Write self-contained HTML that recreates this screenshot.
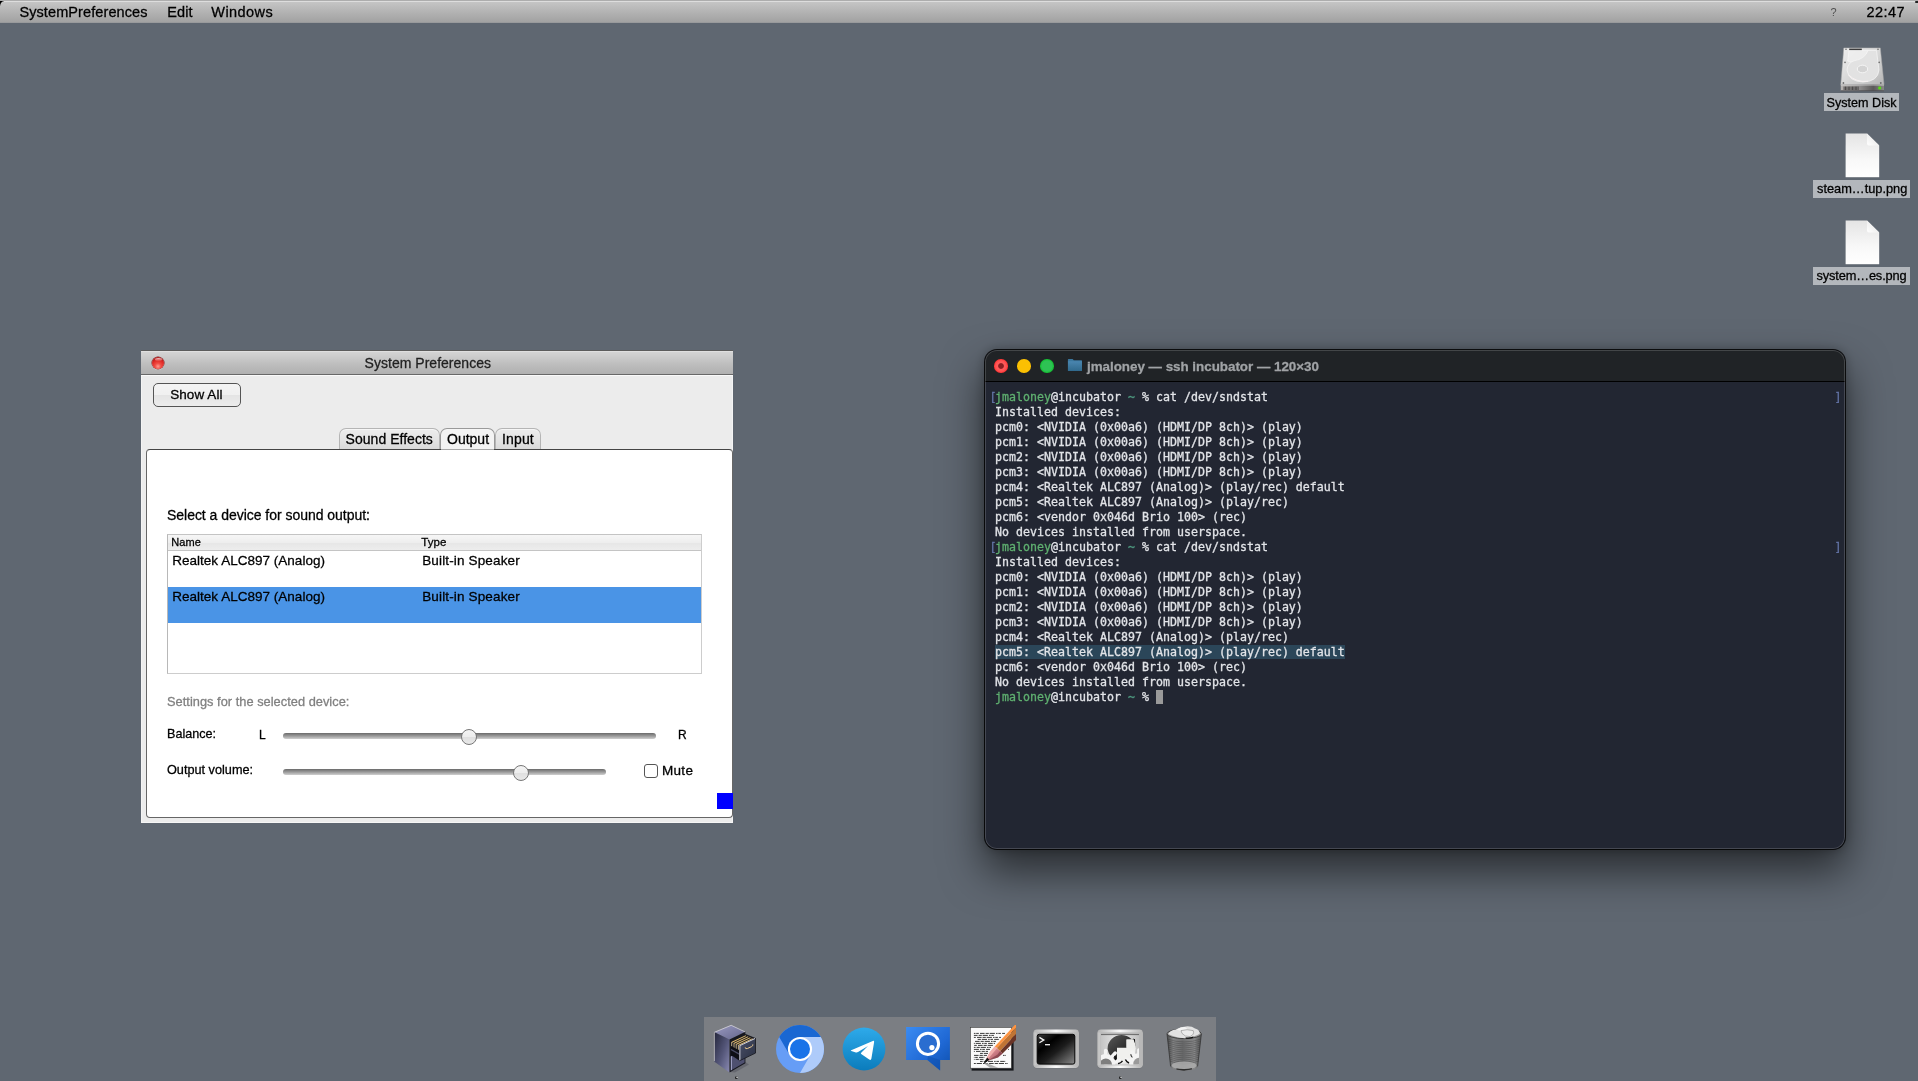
<!DOCTYPE html>
<html lang="en">
<head>
<meta charset="utf-8">
<title>Desktop</title>
<style>
*{box-sizing:border-box;margin:0;padding:0}
html,body{width:1918px;height:1081px;overflow:hidden;background:#5f6771}
body{position:relative;font-family:"Liberation Sans",sans-serif;color:#000;-webkit-font-smoothing:antialiased}
body>div{will-change:transform}
.abs{position:absolute}
.t{position:absolute;white-space:pre;line-height:1;-webkit-text-stroke:.28px currentColor}
/* menubar */
#menubar{position:absolute;left:0;top:0;width:1918px;height:23px;background:linear-gradient(#adadad 0,#adadad 1px,#dedede 1px,#dcdcdc 2px,#c4c4c4 2.5px,#b3b3b3 12px,#a2a2a2 22px,#8f9296 23px)}
#menubar .t{font-size:14.5px;top:5px}
/* desktop icons */
.lbl{position:absolute;background:#b3b7bc;font-size:13px;line-height:18px;height:18px;text-align:center;white-space:pre}
/* sysprefs window */
#sp{position:absolute;left:141px;top:350px;width:592px;height:473px;background:#ececec;overflow:hidden;border-top:1px solid #5c5c5c;box-shadow:inset 1px 0 0 #f4f4f4,inset -1px 0 0 #f4f4f4,inset 0 -1px 0 #f6f6f6}
#sp-title{position:absolute;left:0;top:0;width:592px;height:25px;background:linear-gradient(#e0e0e0 0,#dedede 1px,#d3d3d3 1.5px,#cdcdcd 5px,#bebebe 13px,#b1b1b1 22.5px,#6a6a6a 23px,#666 24px,#fafafa 24px,#fafafa 25px)}
#panel{position:absolute;left:5px;top:98px;width:587px;height:369px;background:#fff;border:1px solid #666;border-top-color:#444;border-radius:4px}

.btn{border:1px solid #555;border-radius:5px;background:linear-gradient(#f4f4f4 0,#f0f0f0 49%,#e4e4e4 51%,#ececec 100%)}
.tab{border:1px solid #b5b5b5;border-bottom:none;border-radius:7px 7px 0 0;background:linear-gradient(#ececec,#e2e2e2 60%,#d8d8d8);box-shadow:inset 0 1px 0 #f6f6f6}
.tab.act{background:#f3f3f3;border-color:#9a9a9a}
#pc{position:absolute;left:0;top:0;width:592px;height:472px}
#tbl{position:absolute;left:26px;top:183px;width:535px;height:140px;border:1px solid #cdcdcd;border-left-color:#b8b8b8;border-top-color:#c4c4c4;background:#fff}
#th{position:absolute;left:0;top:0;width:533px;height:16px;background:linear-gradient(#f6f6f6 0,#eeeeee 50%,#e6e6e6 51%,#ededed 100%);border-bottom:1px solid #c4c4c4}
.row{position:absolute;left:0;width:533px;height:36px}
.rsel{background:#4a94e6}
.trk{position:absolute;height:6px;border-radius:3px;background:linear-gradient(#6a6a6a,#9a9a9a 50%,#cfcfcf)}
.thumb{position:absolute;width:16px;height:16px;border-radius:50%;border:1px solid #777;background:linear-gradient(#f4f4f4 0,#ededed 49%,#e0e0e0 51%,#e8e8e8 100%)}
/* terminal */
#term{position:absolute;left:985px;top:350px;width:860px;height:499px;border-radius:12px;background:#222632;box-shadow:0 0 0 1px rgba(0,0,0,.85),0 21px 42px 2px rgba(0,0,0,.56),0 0 12px rgba(0,0,0,.3);overflow:hidden}
#term-title{position:absolute;left:0;top:0;width:860px;height:32px;background:#202326;border-bottom:1px solid #000}
#term pre{position:absolute;left:3px;top:40px;font-family:"DejaVu Sans Mono","Liberation Mono",monospace;font-size:11.6px;line-height:15px;color:#e2e4e8;letter-spacing:0.017px;-webkit-text-stroke:.3px currentColor}
.g{color:#5fb070}.tl{color:#4e9a80}.br{color:#6272a4;position:relative;left:1.5px}
.sel{background:#2b4659}
/* dock */
#dock{position:absolute;left:704px;top:1017px;width:512px;height:64px;background:#7b7e83}
</style>
</head>
<body>
<!-- MENUBAR -->
<div id="menubar">
<div class="abs" style="left:0;top:1px;width:4px;height:5px;background:radial-gradient(ellipse at 100% 100%,transparent 3.4px,#000 4.2px)"></div>
<div class="abs" style="left:1915px;top:1px;width:3px;height:2px;background:#222;border-radius:1px 0 0 1px"></div>
<span class="t" style="left:19.4px;letter-spacing:.1px">SystemPreferences</span>
<span class="t" style="left:167.2px;letter-spacing:.12px">Edit</span>
<span class="t" style="left:211.3px;letter-spacing:.42px">Windows</span>
<span class="t" style="left:1830.5px;font-size:11px;top:7px;color:#505050;-webkit-text-stroke:0">?</span>
<span class="t" style="left:1866.4px;letter-spacing:.45px">22:47</span>
</div>

<!-- DESKTOP ICONS -->
<div id="desk">
<svg width="60" height="56" viewBox="0 0 60 56" style="position:absolute;left:1832px;top:42px">
<defs>
<linearGradient id="hdT" x1="0" y1="0" x2="1" y2="1"><stop offset="0" stop-color="#efefef"/><stop offset=".5" stop-color="#d8d8d8"/><stop offset="1" stop-color="#b6b6b6"/></linearGradient>
<linearGradient id="hdF" x1="0" y1="0" x2="1" y2="0"><stop offset="0" stop-color="#b8b4b2"/><stop offset=".45" stop-color="#8c8a8a"/><stop offset=".75" stop-color="#5c5a5a"/><stop offset="1" stop-color="#8a8888"/></linearGradient>
</defs>
<polygon points="11.8,5.9 48.3,5.9 52,42.6 8.8,42.6" fill="url(#hdT)" stroke="#a8a8a8" stroke-width=".5"/>
<path d="M17,8.5 H36 Q35,15 27,18.5 Q19,21.5 15.6,19 Z" fill="#efefef" stroke="#fff" stroke-width=".5" opacity=".9"/>
<path d="M36,8.5 H44.5 L47,28 Q46,39.5 31,40 Q16.5,39.6 15,28 Q15.5,21 22,18.8 Q33,17 36,8.5 Z" fill="#e2e2e2" stroke="#f6f6f6" stroke-width=".7"/>
<path d="M16.8,33 Q24,40.6 36,39.2" fill="none" stroke="#fbf3f3" stroke-width=".9"/>
<ellipse cx="30.5" cy="27" rx="5.2" ry="3.8" fill="#d4d4d4" stroke="#fafafa" stroke-width=".8"/>
<rect x="17.2" y="6.6" width="12.6" height="1.5" fill="#3c3c3c"/>
<g fill="#6c6c6c"><circle cx="14" cy="7.2" r=".8"/><circle cx="46" cy="7.2" r=".8"/><circle cx="13" cy="20.4" r=".8"/><circle cx="47.2" cy="20.4" r=".8"/><circle cx="11.4" cy="41" r=".9"/><circle cx="48.8" cy="41" r=".9"/></g>
<polygon points="8.8,42.6 52,42.6 52,49 8.8,49" fill="url(#hdF)"/>
<rect x="8.8" y="42.6" width="43.2" height=".8" fill="#d6d6d6"/>
<rect x="8.8" y="48.4" width="43.2" height=".8" fill="#4a4a4e"/>
<g fill="#4c4a4a"><rect x="11.6" y="44.5" width="1" height="3.5"/><rect x="13" y="44.5" width="1" height="3.5"/><rect x="14.4" y="44.5" width="1" height="3.5"/><rect x="15.8" y="44.5" width="1" height="3.5"/><rect x="17.2" y="44.5" width="1" height="3.5"/><rect x="18.6" y="44.5" width="1" height="3.5"/><rect x="20" y="44.5" width="1" height="3.5"/><rect x="21.4" y="44.5" width="1" height="3.5"/><rect x="22.8" y="44.5" width="1" height="3.5"/><rect x="24.2" y="44.5" width="1" height="3.5"/><rect x="25.6" y="44.5" width="1" height="3.5"/></g>
<circle cx="47.6" cy="46" r="1.3" fill="#58e010"/><circle cx="47.6" cy="46" r="2" fill="#58e010" opacity=".35"/>
</svg>
<div class="lbl" style="left:1824px;top:93px;width:75px"><span class="t" style="left:2.6px;top:3.6px;font-size:12.6px">System Disk</span></div>
<svg width="40" height="50" viewBox="0 0 40 50" style="position:absolute;left:1842px;top:130px">
<defs><linearGradient id="fl" x1="0" y1="0" x2="0" y2="1"><stop offset="0" stop-color="#e4e4e4"/><stop offset=".6" stop-color="#f8f8f8"/><stop offset="1" stop-color="#ffffff"/></linearGradient>
<linearGradient id="fc" x1="0" y1="1" x2="1" y2="0"><stop offset="0" stop-color="#ffffff"/><stop offset=".5" stop-color="#f0f0f0"/><stop offset="1" stop-color="#cfcfcf"/></linearGradient></defs>
<path d="M3.6,3.4 H25 L37.2,15.4 V47.4 H3.6 Z" fill="#4a505a" opacity=".35" transform="translate(0,.7)"/>
<path d="M3.6,3.4 H25 L37.2,15.4 V47.2 H3.6 Z" fill="url(#fl)"/>
<path d="M25,3.4 L37.2,15.4 H27 Q25,15.4 25,13.4 Z" fill="url(#fc)"/>
</svg>
<div class="lbl" style="left:1813px;top:180px;width:97px"><span class="t" style="left:4px;top:3px;font-size:12.8px">steam…tup.png</span></div>
<svg width="40" height="50" viewBox="0 0 40 50" style="position:absolute;left:1842px;top:217px">
<path d="M3.6,3.4 H25 L37.2,15.4 V47.4 H3.6 Z" fill="#4a505a" opacity=".35" transform="translate(0,.7)"/>
<path d="M3.6,3.4 H25 L37.2,15.4 V47.2 H3.6 Z" fill="url(#fl)"/>
<path d="M25,3.4 L37.2,15.4 H27 Q25,15.4 25,13.4 Z" fill="url(#fc)"/>
</svg>
<div class="lbl" style="left:1813px;top:267px;width:97px"><span class="t" style="left:3.4px;top:3px;font-size:12.8px;letter-spacing:-.12px">system…es.png</span></div>
</div>

<!-- SYSTEM PREFERENCES -->
<div id="sp">
<div id="sp-title">
<div class="abs" style="left:11px;top:6px;width:12px;height:12px;border-radius:50%;background:radial-gradient(circle at 50% 78%,#ff9a90 0,#f04a42 28%,#e02a26 55%,#b01414 80%,#8a1010 100%);box-shadow:0 0 0 .5px #7a1a1a,0 1px 0 rgba(255,255,255,.55)"></div>
<div class="abs" style="left:13.5px;top:6.8px;width:7px;height:3.5px;border-radius:50%;background:linear-gradient(rgba(255,255,255,.75),rgba(255,255,255,.05))"></div>
<span class="t" id="sp-tt" style="left:223.6px;top:5px;font-size:14px;color:#222;letter-spacing:.02px">System Preferences</span>
</div>
<div class="abs btn" style="left:12px;top:32px;width:88px;height:24px"><span class="t" style="left:16.2px;top:3.8px;letter-spacing:.08px;font-size:13.5px">Show All</span></div>
<div class="abs tab" style="left:198px;top:77px;width:101px;height:22px"><span class="t" style="left:5.6px;top:2.6px;font-size:14px;letter-spacing:.03px">Sound Effects</span></div>
<div class="abs tab" style="left:354px;top:77px;width:46px;height:22px"><span class="t" style="left:6px;top:2.6px;font-size:14px;letter-spacing:.15px">Input</span></div>
<div id="panel"></div>
<div class="abs" style="left:300px;top:98px;width:53px;height:1px;background:#a8a8a8"></div><div class="abs tab act" style="left:299px;top:77px;width:55px;height:21px"><span class="t" style="left:6px;top:2.6px;font-size:14px">Output</span></div>
<div id="pc">
<span class="t" style="left:26px;top:157px;font-size:14px;letter-spacing:-.03px">Select a device for sound output:</span>
<div id="tbl">
<div id="th"><span class="t" style="left:3.2px;top:2px;font-size:11px;letter-spacing:.1px">Name</span><span class="t" style="left:253.2px;top:2px;font-size:11.5px;letter-spacing:.1px">Type</span></div>
<div class="row" style="top:16px"><span class="t" style="left:4.2px;top:3px;font-size:13.5px;letter-spacing:.02px">Realtek ALC897 (Analog)</span><span class="t" style="left:254.2px;top:3px;font-size:13.5px;letter-spacing:.15px">Built-in Speaker</span></div>
<div class="row rsel" style="top:52px"><span class="t" style="left:4.2px;top:3px;font-size:13.5px;letter-spacing:.02px">Realtek ALC897 (Analog)</span><span class="t" style="left:254.2px;top:3px;font-size:13.5px;letter-spacing:.15px">Built-in Speaker</span></div>
</div>
<span class="t" style="left:26px;top:345px;font-size:12.8px;letter-spacing:.03px;color:#808080">Settings for the selected device:</span>
<span class="t" style="left:26px;top:377px;font-size:12.6px">Balance:</span>
<span class="t" style="left:118px;top:378px;font-size:12px">L</span>
<div class="trk" style="left:142px;top:382px;width:373px"></div>
<div class="thumb" style="left:320.4px;top:378px"></div>
<span class="t" style="left:537px;top:378px;font-size:12px">R</span>
<span class="t" style="left:26px;top:413px;font-size:12.7px">Output volume:</span>
<div class="trk" style="left:142px;top:418px;width:323px"></div>
<div class="thumb" style="left:372.4px;top:414px"></div>
<div class="abs" style="left:503px;top:413px;width:14px;height:14px;border:1px solid #555;border-radius:3px;background:#fff"></div>
<span class="t" style="left:521px;top:413px;font-size:13.5px;letter-spacing:.3px">Mute</span>
<div class="abs" style="left:576px;top:442px;width:16px;height:16px;background:#0000ff"></div>
</div>
</div>

<!-- TERMINAL -->
<div id="term">
<div class="abs" style="left:0;top:0;width:860px;height:499px;border-radius:12px;box-shadow:inset 0 0 0 1px rgba(255,255,255,.16);z-index:5;pointer-events:none"></div>
<div id="term-title">
<div class="abs" style="left:9.2px;top:9.3px;width:13.6px;height:13.6px;border-radius:50%;background:radial-gradient(circle,#8a1f22 0,#8a1f22 2.4px,#ff5b5b 3.3px,#ff5252 5.2px,#ff3434 6.8px)"></div>
<div class="abs" style="left:32.2px;top:9.3px;width:13.6px;height:13.6px;border-radius:50%;background:#fbc002"></div>
<div class="abs" style="left:55.2px;top:9.3px;width:13.6px;height:13.6px;border-radius:50%;background:radial-gradient(circle,#2ec254 0,#2ec254 5px,#12c030 6.8px)"></div>
<svg width="16" height="14" viewBox="0 0 16 14" style="position:absolute;left:82px;top:8px"><defs><linearGradient id="fd" x1="0" y1="0" x2="0" y2="1"><stop offset="0" stop-color="#4a86b0"/><stop offset="1" stop-color="#30698c"/></linearGradient></defs><path d="M.9,1.6 Q.9,1 1.5,1 H5.6 L6.8,2.2 H14.4 Q15,2.2 15,2.8 V4 H.9 Z" fill="#3b779e"/><rect x=".9" y="3.2" width="14.1" height="9.9" rx=".6" fill="url(#fd)"/></svg>
<span class="t" id="tt" style="left:102px;top:10px;font-size:13.4px;font-weight:bold;color:#a0a3a6;letter-spacing:-.02px">jmaloney — ssh incubator — 120×30</span>
</div>
<pre><span class="br">[</span><span class="g">jmaloney</span>@incubator <span class="tl">~</span> % cat /dev/sndstat
 Installed devices:
 pcm0: &lt;NVIDIA (0x00a6) (HDMI/DP 8ch)&gt; (play)
 pcm1: &lt;NVIDIA (0x00a6) (HDMI/DP 8ch)&gt; (play)
 pcm2: &lt;NVIDIA (0x00a6) (HDMI/DP 8ch)&gt; (play)
 pcm3: &lt;NVIDIA (0x00a6) (HDMI/DP 8ch)&gt; (play)
 pcm4: &lt;Realtek ALC897 (Analog)&gt; (play/rec) default
 pcm5: &lt;Realtek ALC897 (Analog)&gt; (play/rec)
 pcm6: &lt;vendor 0x046d Brio 100&gt; (rec)
 No devices installed from userspace.
<span class="br">[</span><span class="g">jmaloney</span>@incubator <span class="tl">~</span> % cat /dev/sndstat
 Installed devices:
 pcm0: &lt;NVIDIA (0x00a6) (HDMI/DP 8ch)&gt; (play)
 pcm1: &lt;NVIDIA (0x00a6) (HDMI/DP 8ch)&gt; (play)
 pcm2: &lt;NVIDIA (0x00a6) (HDMI/DP 8ch)&gt; (play)
 pcm3: &lt;NVIDIA (0x00a6) (HDMI/DP 8ch)&gt; (play)
 pcm4: &lt;Realtek ALC897 (Analog)&gt; (play/rec)
 <span class="sel">pcm5: &lt;Realtek ALC897 (Analog)&gt; (play/rec) default</span>
 pcm6: &lt;vendor 0x046d Brio 100&gt; (rec)
 No devices installed from userspace.
 <span class="g">jmaloney</span>@incubator <span class="tl">~</span> % <span style="background:#9a9a9a"> </span></pre>
<span class="t" style="left:849.5px;top:41.5px;font-family:'DejaVu Sans Mono',monospace;font-size:11.6px;color:#6272a4">]</span>
<span class="t" style="left:849.5px;top:191.5px;font-family:'DejaVu Sans Mono',monospace;font-size:11.6px;color:#6272a4">]</span>
</div>

<!-- DOCK -->
<div id="dock">
<svg width="512" height="64" viewBox="0 0 512 64" style="position:absolute;left:0;top:0">
<defs>
<linearGradient id="cabL" x1="0" y1="0" x2="1" y2="1"><stop offset="0" stop-color="#23253a"/><stop offset=".55" stop-color="#55577a"/><stop offset="1" stop-color="#8a8ab2"/></linearGradient>
<linearGradient id="cabT" x1="0" y1="0" x2="1" y2="1"><stop offset="0" stop-color="#9a9ac0"/><stop offset="1" stop-color="#64658c"/></linearGradient>
<linearGradient id="cabD" x1="0" y1="0" x2="1" y2="1"><stop offset="0" stop-color="#4a5068"/><stop offset="1" stop-color="#2a3042"/></linearGradient>
<linearGradient id="tg" x1="0" y1="0" x2="0" y2="1"><stop offset="0" stop-color="#2eaaea"/><stop offset="1" stop-color="#0b7cbc"/></linearGradient>
<linearGradient id="qs" x1="0" y1="0" x2="1" y2="1"><stop offset="0" stop-color="#3a8bf2"/><stop offset=".6" stop-color="#1f68d4"/><stop offset="1" stop-color="#0e50ad"/></linearGradient>
<linearGradient id="frm" x1="0" y1="0" x2="1" y2="0"><stop offset="0" stop-color="#b4b4b4"/><stop offset=".5" stop-color="#fafafa"/><stop offset="1" stop-color="#b4b4b4"/></linearGradient>
<linearGradient id="scr" x1="0" y1="0" x2="1" y2="1"><stop offset="0" stop-color="#3a3a3a"/><stop offset=".3" stop-color="#000"/><stop offset=".55" stop-color="#1c1c1c"/><stop offset="1" stop-color="#8a8a8a"/></linearGradient>
<linearGradient id="gsbg" x1="0" y1="0" x2="1" y2="0"><stop offset="0" stop-color="#c4c4c4"/><stop offset=".5" stop-color="#ececec"/><stop offset="1" stop-color="#c0c0c0"/></linearGradient>
<linearGradient id="gsd" x1="0" y1="0" x2="1" y2="1"><stop offset="0" stop-color="#5a5a5a"/><stop offset="1" stop-color="#0a0a0a"/></linearGradient>
<linearGradient id="trb" x1="0" y1="0" x2="1" y2="0"><stop offset="0" stop-color="#3c3c3c"/><stop offset=".18" stop-color="#858585"/><stop offset=".45" stop-color="#6a6a6a"/><stop offset=".8" stop-color="#8a8a8a"/><stop offset="1" stop-color="#444"/></linearGradient>
<linearGradient id="pw" x1="0" y1="0" x2="1" y2="1"><stop offset="0" stop-color="#f6b0b0"/><stop offset="1" stop-color="#a04858"/></linearGradient>
<clipPath id="gsclip"><rect x="13" y="17" width="38" height="30.5"/></clipPath>
</defs>
<!-- 1 file cabinet -->
<g>
<polygon points="41.4,45 45,47.5 31,55.5 26,55" fill="#5e6068" opacity=".7"/>
<polygon points="10.1,15.1 27.2,8 41.4,14.8 25.5,22.5" fill="url(#cabT)"/>
<polygon points="10.1,15.1 25.5,22.5 25.5,55.4 10.1,44.4" fill="url(#cabL)"/>
<polygon points="25.5,22.5 41.4,14.8 41.4,46.2 25.5,55.4" fill="#16171f"/>
<polygon points="26.8,39.5 40.6,32.5 40.6,45.6 26.8,53.4" fill="#4e5070"/>
<polygon points="26.8,39.5 28,38.9 28,52.7 26.8,53.4" fill="#9a9cc0"/>
<polyline points="10.4,44.2 10.4,15.3 27.2,8.3 41,14.9" fill="none" stroke="#e8e6e0" stroke-width=".8" opacity=".8"/>
<polygon points="26.6,24.4 41.6,17 51.5,21 35.5,28.4" fill="#1a1b22"/>
<g stroke="#dcb86e" stroke-width="1.05"><line x1="27.9" y1="25.2" x2="41.9" y2="18.6"/><line x1="30.2" y1="26.2" x2="44.2" y2="19.6"/><line x1="32.4" y1="27.2" x2="46.4" y2="20.6"/><line x1="34.6" y1="28.2" x2="48.6" y2="21.6"/></g>
<g stroke="#ecd4a0" stroke-width=".8"><line x1="27.7" y1="25" x2="27.7" y2="29.6"/><line x1="30" y1="26" x2="30" y2="30.8"/><line x1="32.2" y1="27" x2="32.2" y2="31.9"/><line x1="34.4" y1="28" x2="34.4" y2="32.8"/></g>
<polygon points="27,29 35.5,33.6 35.5,43.8 27,38" fill="#0e0f15"/>
<polygon points="27,31.8 35.5,36.6 35.5,38 27,33.2" fill="#4a4c66"/>
<polygon points="35.5,28.4 51.5,21 51.5,36.1 35.5,43.8" fill="url(#cabD)"/>
<polyline points="35.9,43.4 35.9,28.6 51.3,21.4" fill="none" stroke="#dcdce4" stroke-width=".9"/>
<polyline points="51.5,21 51.5,36.1 35.5,43.8" fill="none" stroke="#14151c" stroke-width=".8"/>
<path d="M41.2,30.3 Q41.2,32.3 43.4,31.5 L47.6,29.6 Q49.2,28.8 48.8,27.4" fill="none" stroke="#ecca90" stroke-width="1"/>
<rect x="31.2" y="59.6" width="2.2" height="2.2" fill="#111"/><rect x="32.4" y="59.8" width="1.2" height="1.2" fill="#f4f4f4"/>
</g>
<!-- 2 chromium -->
<g transform="translate(64,0)">
<circle cx="32" cy="32" r="24" fill="#669df6"/>
<path d="M11.22,20 A24,24 0 0 1 52.78,20 L32,20 L21.61,38 Z" fill="#1967d2"/>
<path d="M52.78,20 A24,24 0 0 1 32,56 L42.39,38 L32,20 Z" fill="#aecbfa"/>
<circle cx="32" cy="32" r="12.1" fill="#fff"/>
<circle cx="32" cy="32" r="10" fill="#1a73e8"/>
</g>
<!-- 3 telegram -->
<g transform="translate(128,0)">
<circle cx="32" cy="32" r="21.4" fill="url(#tg)"/>
<path d="M19.2,33.2 L40.8,24 Q42.4,23.4 42.1,25.2 L39.4,41.6 Q39,43.6 37.2,42.5 L29.2,37 Q28.5,36.5 29.2,35.8 L36,29 L26,35.1 Q25,35.7 23.9,35.4 L19.3,34.1 Q18.3,33.7 19.2,33.2 Z" fill="#fff"/>
</g>
<!-- 4 quassel -->
<g transform="translate(192,0)">
<path d="M10.1,10.1 H53.9 V43.1 H44.1 V53.6 L31.4,43.1 H10.1 Z" fill="url(#qs)"/>
<path d="M32,38.9 L44.1,43.1 V53.6 L31.4,43.1 Z" fill="#0d4ea8" opacity=".45"/>
<circle cx="32" cy="26.8" r="10.6" fill="#2a6dd0" stroke="#fff" stroke-width="3"/>
<circle cx="35.9" cy="30.6" r="2.6" fill="#fff"/>
</g>
<!-- 5 textedit -->
<g transform="translate(256,0)">
<rect x="11.6" y="11.6" width="42" height="42" fill="#14161a"/>
<rect x="10.4" y="10.4" width="41" height="40.8" fill="#fafafa" stroke="#3a3a3a" stroke-width=".6"/>
<g stroke="#1a1a1a" stroke-width=".85" stroke-dasharray="1.6 .7 2.6 1.2 4.6 1 3.2 .9 5.2 1.1">
<line x1="13.9" y1="16.4" x2="45" y2="16.4" stroke-dashoffset="0"/><line x1="13.9" y1="18.4" x2="35" y2="18.4" stroke-dashoffset="7"/><line x1="13.9" y1="20.4" x2="41" y2="20.4" stroke-dashoffset="3"/><line x1="17" y1="22.4" x2="39" y2="22.4" stroke-dashoffset="11"/><line x1="13.9" y1="24.4" x2="37" y2="24.4" stroke-dashoffset="5"/><line x1="13.9" y1="26.4" x2="35" y2="26.4" stroke-dashoffset="14"/><line x1="13.9" y1="28.4" x2="33" y2="28.4" stroke-dashoffset="2"/><line x1="13.9" y1="30.4" x2="31" y2="30.4" stroke-dashoffset="9"/><line x1="13.9" y1="32.4" x2="30" y2="32.4" stroke-dashoffset="16"/><line x1="13.9" y1="34.4" x2="28" y2="34.4" stroke-dashoffset="4"/><line x1="20" y1="36.4" x2="28" y2="36.4" stroke-dashoffset="12"/><line x1="13.9" y1="38.4" x2="27" y2="38.4" stroke-dashoffset="6"/><line x1="13.9" y1="40.4" x2="25" y2="40.4" stroke-dashoffset="1"/><line x1="13.9" y1="42.4" x2="23.5" y2="42.4" stroke-dashoffset="10"/><line x1="20" y1="44.4" x2="46" y2="44.4" stroke-dashoffset="8"/><line x1="13.9" y1="46.5" x2="48" y2="46.5" stroke-dashoffset="13"/>
<line x1="43" y1="38.4" x2="46" y2="38.4" stroke-dashoffset="0"/><line x1="47" y1="32.4" x2="49" y2="32.4" stroke-dashoffset="5"/>
</g>
<polygon points="24,46.6 30,50.8 38,50.8 27,46" fill="#9a9a9a" opacity=".8"/>
<polygon points="34.8,29.6 54.8,8 56,8 56,10.5 36.8,31" fill="#ff9440"/>
<polygon points="36.8,31 56,10.5 56,17 40,34.2" fill="#c07434"/>
<polygon points="40,34.2 56,17 56,23.1 42.6,36.6" fill="#6a3426"/>
<polygon points="34.8,29.6 42.6,36.6 38,40.5 27.5,43.8 26,42.2 30,35" fill="url(#pw)"/>
<polygon points="34.8,29.6 37,31.2 28,42 26,42.2 30,35" fill="#f8b8b4" opacity=".8"/>
<polygon points="42.6,36.6 38,40.5 28.6,43.5 27.5,43.8 37.6,37.4 40,34.2" fill="#6a3036" opacity=".55"/>
<polygon points="26,42.2 27.5,43.8 23.8,46.8" fill="#0a0a0a"/>
<polygon points="27.2,40.6 29.2,42.8 23.8,46.8" fill="#111"/>
</g>
<!-- 6 terminal -->
<g transform="translate(320,0)">
<rect x="9.5" y="12.9" width="45.3" height="38.6" rx="3.6" fill="#6a6c70" opacity=".5"/>
<rect x="9.5" y="12.6" width="45.3" height="38.4" rx="3.4" fill="url(#frm)"/>
<rect x="9.5" y="15.4" width="45.3" height="33" fill="#b8b8b8"/>
<rect x="10.2" y="15.4" width="2.4" height="33" fill="#c6c6c6"/>
<rect x="13.2" y="17.3" width="37.6" height="29.8" rx="2" fill="url(#scr)" stroke="#050505" stroke-width="1"/>
<polyline points="15.4,20.4 19.8,23.1 15.4,25.8" fill="none" stroke="#f4f4f4" stroke-width="1.3"/>
<line x1="21" y1="27.7" x2="26" y2="27.7" stroke="#f4f4f4" stroke-width="1.3"/>
</g>
<!-- 7 gnustep -->
<g transform="translate(384,0)">
<rect x="9.5" y="12.9" width="45.3" height="38.6" rx="3.6" fill="#6a6c70" opacity=".5"/>
<rect x="9.5" y="12.6" width="45.3" height="38.4" rx="3.4" fill="url(#frm)"/>
<rect x="9.5" y="15.4" width="45.3" height="33" fill="#b8b8b8"/>
<rect x="10.2" y="15.4" width="2.4" height="33" fill="#c6c6c6"/>
<rect x="13" y="17" width="38" height="30.5" fill="url(#gsbg)"/>
<rect x="13" y="17" width="38" height="1.1" fill="#4a4a4a" opacity=".7"/>
<g clip-path="url(#gsclip)">
<circle cx="33.5" cy="32" r="14" fill="#f0f0ee"/>
<path d="M19.5,32 A14,14 0 0 1 47.5,32 L47,22.5 L38.5,22.5 L38.5,30.8 L29,30.8 L29,44 Q21,40.5 19.5,32 Z" fill="url(#gsd)"/>
<path d="M38.5,22.5 H46 Q47.6,27 47.5,32 L38.5,30.8 Z" fill="#eeeeec"/>
<path d="M45.2,21.6 L47,22.2 L47,26 Z" fill="#111"/>
<circle cx="17.8" cy="46.6" r="9.6" fill="#f4f4f4"/>
<g stroke="#f4f4f4" stroke-width="3.4" stroke-linecap="round"><line x1="17.8" y1="46.6" x2="17.6" y2="33.4"/><line x1="17.8" y1="46.6" x2="27.2" y2="36"/><line x1="17.8" y1="46.6" x2="31.5" y2="43.5"/></g>
<circle cx="17.8" cy="47.6" r="6.2" fill="#7e7e7e"/>
<circle cx="51" cy="45.6" r="9.6" fill="#f4f4f4"/>
<g stroke="#f4f4f4" stroke-width="3.4" stroke-linecap="round"><line x1="51" y1="45.6" x2="44" y2="35"/><line x1="51" y1="45.6" x2="38.4" y2="42.6"/><line x1="51" y1="45.6" x2="50.8" y2="33"/></g>
<circle cx="51.5" cy="47" r="6.2" fill="#9a9a9a"/>
<path d="M26.5,39 Q28.5,41 27.2,43" fill="none" stroke="#111" stroke-width="1.4"/>
<path d="M30,46.8 Q33,46 34.5,43.8" fill="none" stroke="#111" stroke-width="1.4"/>
<path d="M37.4,42.6 Q38.4,45 41,46" fill="none" stroke="#111" stroke-width="1.4"/>
<path d="M42.8,37.2 Q43,39.4 44.4,40.4" fill="none" stroke="#222" stroke-width="1.1"/>
</g>
<rect x="31.2" y="59.6" width="2.2" height="2.2" fill="#111"/><rect x="32.4" y="59.8" width="1.2" height="1.2" fill="#f4f4f4"/>
</g>
<!-- 8 trash -->
<g transform="translate(448,0)">
<path d="M15,17 L18.6,49.4 A13.5,4.4 0 0 0 45.6,49.4 L49.4,17 Z" fill="url(#trb)" opacity=".8"/>
<g stroke="#2e2e2e" stroke-width=".5" opacity=".6" fill="none">
<path d="M15.5,22 Q32,28 49,22"/><path d="M15.7,24 Q32,30 48.8,24"/><path d="M15.9,26 Q32,32 48.6,26"/><path d="M16.1,28 Q32,34 48.4,28"/><path d="M16.3,30 Q32,36 48.2,30"/><path d="M16.5,32 Q32,38 48,32"/><path d="M16.7,34 Q32,40 47.8,34"/><path d="M16.9,36 Q32,42 47.6,36"/><path d="M17.1,38 Q32,44 47.4,38"/><path d="M17.3,40 Q32,46 47.2,40"/><path d="M17.6,42 Q32,48 46.9,42"/><path d="M17.8,44 Q32,50 46.7,44"/>
</g>
<path d="M15,17 L18.6,49.4 M49.4,17 L45.6,49.4" stroke="#2a2a2a" stroke-width=".8" opacity=".8" fill="none"/>
<ellipse cx="32.1" cy="48.4" rx="12.4" ry="3.9" fill="#b0b0b0" opacity=".8"/>
<path d="M24.5,52 Q32,54.6 40,51.8 Q32,53.2 24.5,52Z" fill="#222" stroke="#222" stroke-width=".6"/>
<ellipse cx="32.2" cy="16.8" rx="17.2" ry="4.8" fill="#9c9c9c" stroke="#2e2e2e" stroke-width=".8"/>
<path d="M16.4,17 Q18,13.4 24,12.6 Q29,9.4 34,9.4 Q40,9 43,11.6 Q47.6,12.6 47.8,16.6 Q44,19.8 33,21.2 Q22,20.6 16.4,17 Z" fill="#e2e2e2"/>
<path d="M24,12.6 Q29,9.6 33,10 L36,12.4 L29,14 Z" fill="#f4f4f4"/>
<path d="M29,13.6 Q35,11.8 41.2,13.6 Q42.8,17.4 38,19.6 Q32.4,19.8 30,16.4 Z" fill="#ececec" stroke="#777" stroke-width=".5"/>
<path d="M33.6,20.2 Q37,21.2 41.4,19.6 L41,21 Q37,22.2 34,21.4 Z" fill="#111"/>
</g>
</svg>
</div>
</body>
</html>
